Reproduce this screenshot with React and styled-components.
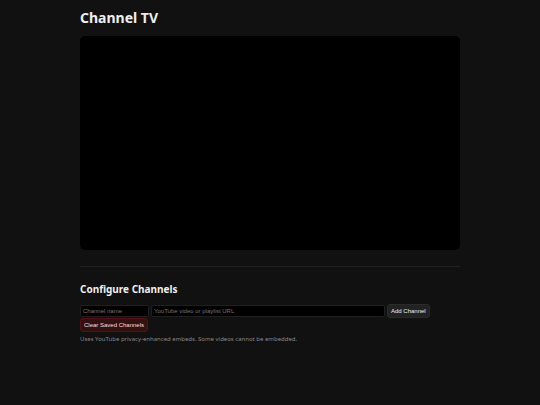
import { useState } from "react";
import styled, { createGlobalStyle } from "styled-components";

const GlobalStyle = createGlobalStyle`
	* {
		box-sizing: border-box;
	}

	body {
		margin: 0;
		background: #111;
		color: #eee;
		font-family: "Noto Sans", sans-serif;
	}
`;

const Page = styled.main`
	max-width: 396px;
	margin: 0 auto;
	padding: 8px;
`;

const Title = styled.h1`
	margin: 0 0 8px;
	font-size: 14px;
	line-height: 20px;
`;

const Player = styled.div`
	width: 100%;
	aspect-ratio: 16 / 9;
	border-radius: 5px;
	background: #000;
`;

const Settings = styled.section`
	margin-top: 16px;
	padding-top: 15px;
	border-top: 1px solid #222;
`;

const SettingsTitle = styled.h2`
	margin: 0 0 8px;
	font-size: 10px;
	line-height: 14px;
`;

const ChannelForm = styled.form`
	display: flex;
	flex-wrap: wrap;
	align-items: center;
	column-gap: 2px;
`;

const Field = styled.input`
	flex: ${(props) => (props.$wide ? "0 1 234px" : "0 1 69px")};
	min-width: 0;
	height: 12px;
	padding: 0 2px;
	border: 1px solid #1f1f1f;
	border-radius: 2px;
	background: #000;
	color: #eee;
	font: 6px "Liberation Sans", sans-serif;

	&::placeholder {
		color: #757575;
	}
`;

const Button = styled.button`
	height: 14px;
	padding: 0 3px;
	border: 1px solid ${(props) => (props.$danger ? "#511" : "#2a2a2a")};
	border-radius: 3px;
	background: ${(props) => (props.$danger ? "#311" : "#222")};
	color: ${(props) => (props.$danger ? "#fdd" : "#eee")};
	font: 6px "Liberation Sans", sans-serif;
	cursor: pointer;
`;

const Note = styled.p`
	margin: 3px 0 0;
	color: #888;
	font-size: 6px;
	line-height: 9px;
`;

function App() {
	const [name, setName] = useState("");
	const [url, setUrl] = useState("");
	const [channels, setChannels] = useState([]);

	const addChannel = (e) => {
		e.preventDefault();
		if (name && url) {
			setChannels([...channels, { name, url }]);
			setName("");
			setUrl("");
		}
	};

	return (
		<Page>
			<GlobalStyle />
			<Title>Channel TV</Title>
			<Player />

			<Settings>
				<SettingsTitle>Configure Channels</SettingsTitle>
				<ChannelForm onSubmit={addChannel}>
					<Field
						aria-label="Channel name"
						placeholder="Channel name"
						value={name}
						onChange={(e) => setName(e.target.value)}
					/>
					<Field
						$wide
						aria-label="YouTube video or playlist URL"
						placeholder="YouTube video or playlist URL"
						value={url}
						onChange={(e) => setUrl(e.target.value)}
					/>
					<Button type="submit">Add Channel</Button>
					<Button type="button" $danger onClick={() => setChannels([])}>
						Clear Saved Channels
					</Button>
				</ChannelForm>
				<Note>
					Uses YouTube privacy-enhanced embeds. Some videos cannot be embedded.
				</Note>
			</Settings>
		</Page>
	);
}

export default App;
